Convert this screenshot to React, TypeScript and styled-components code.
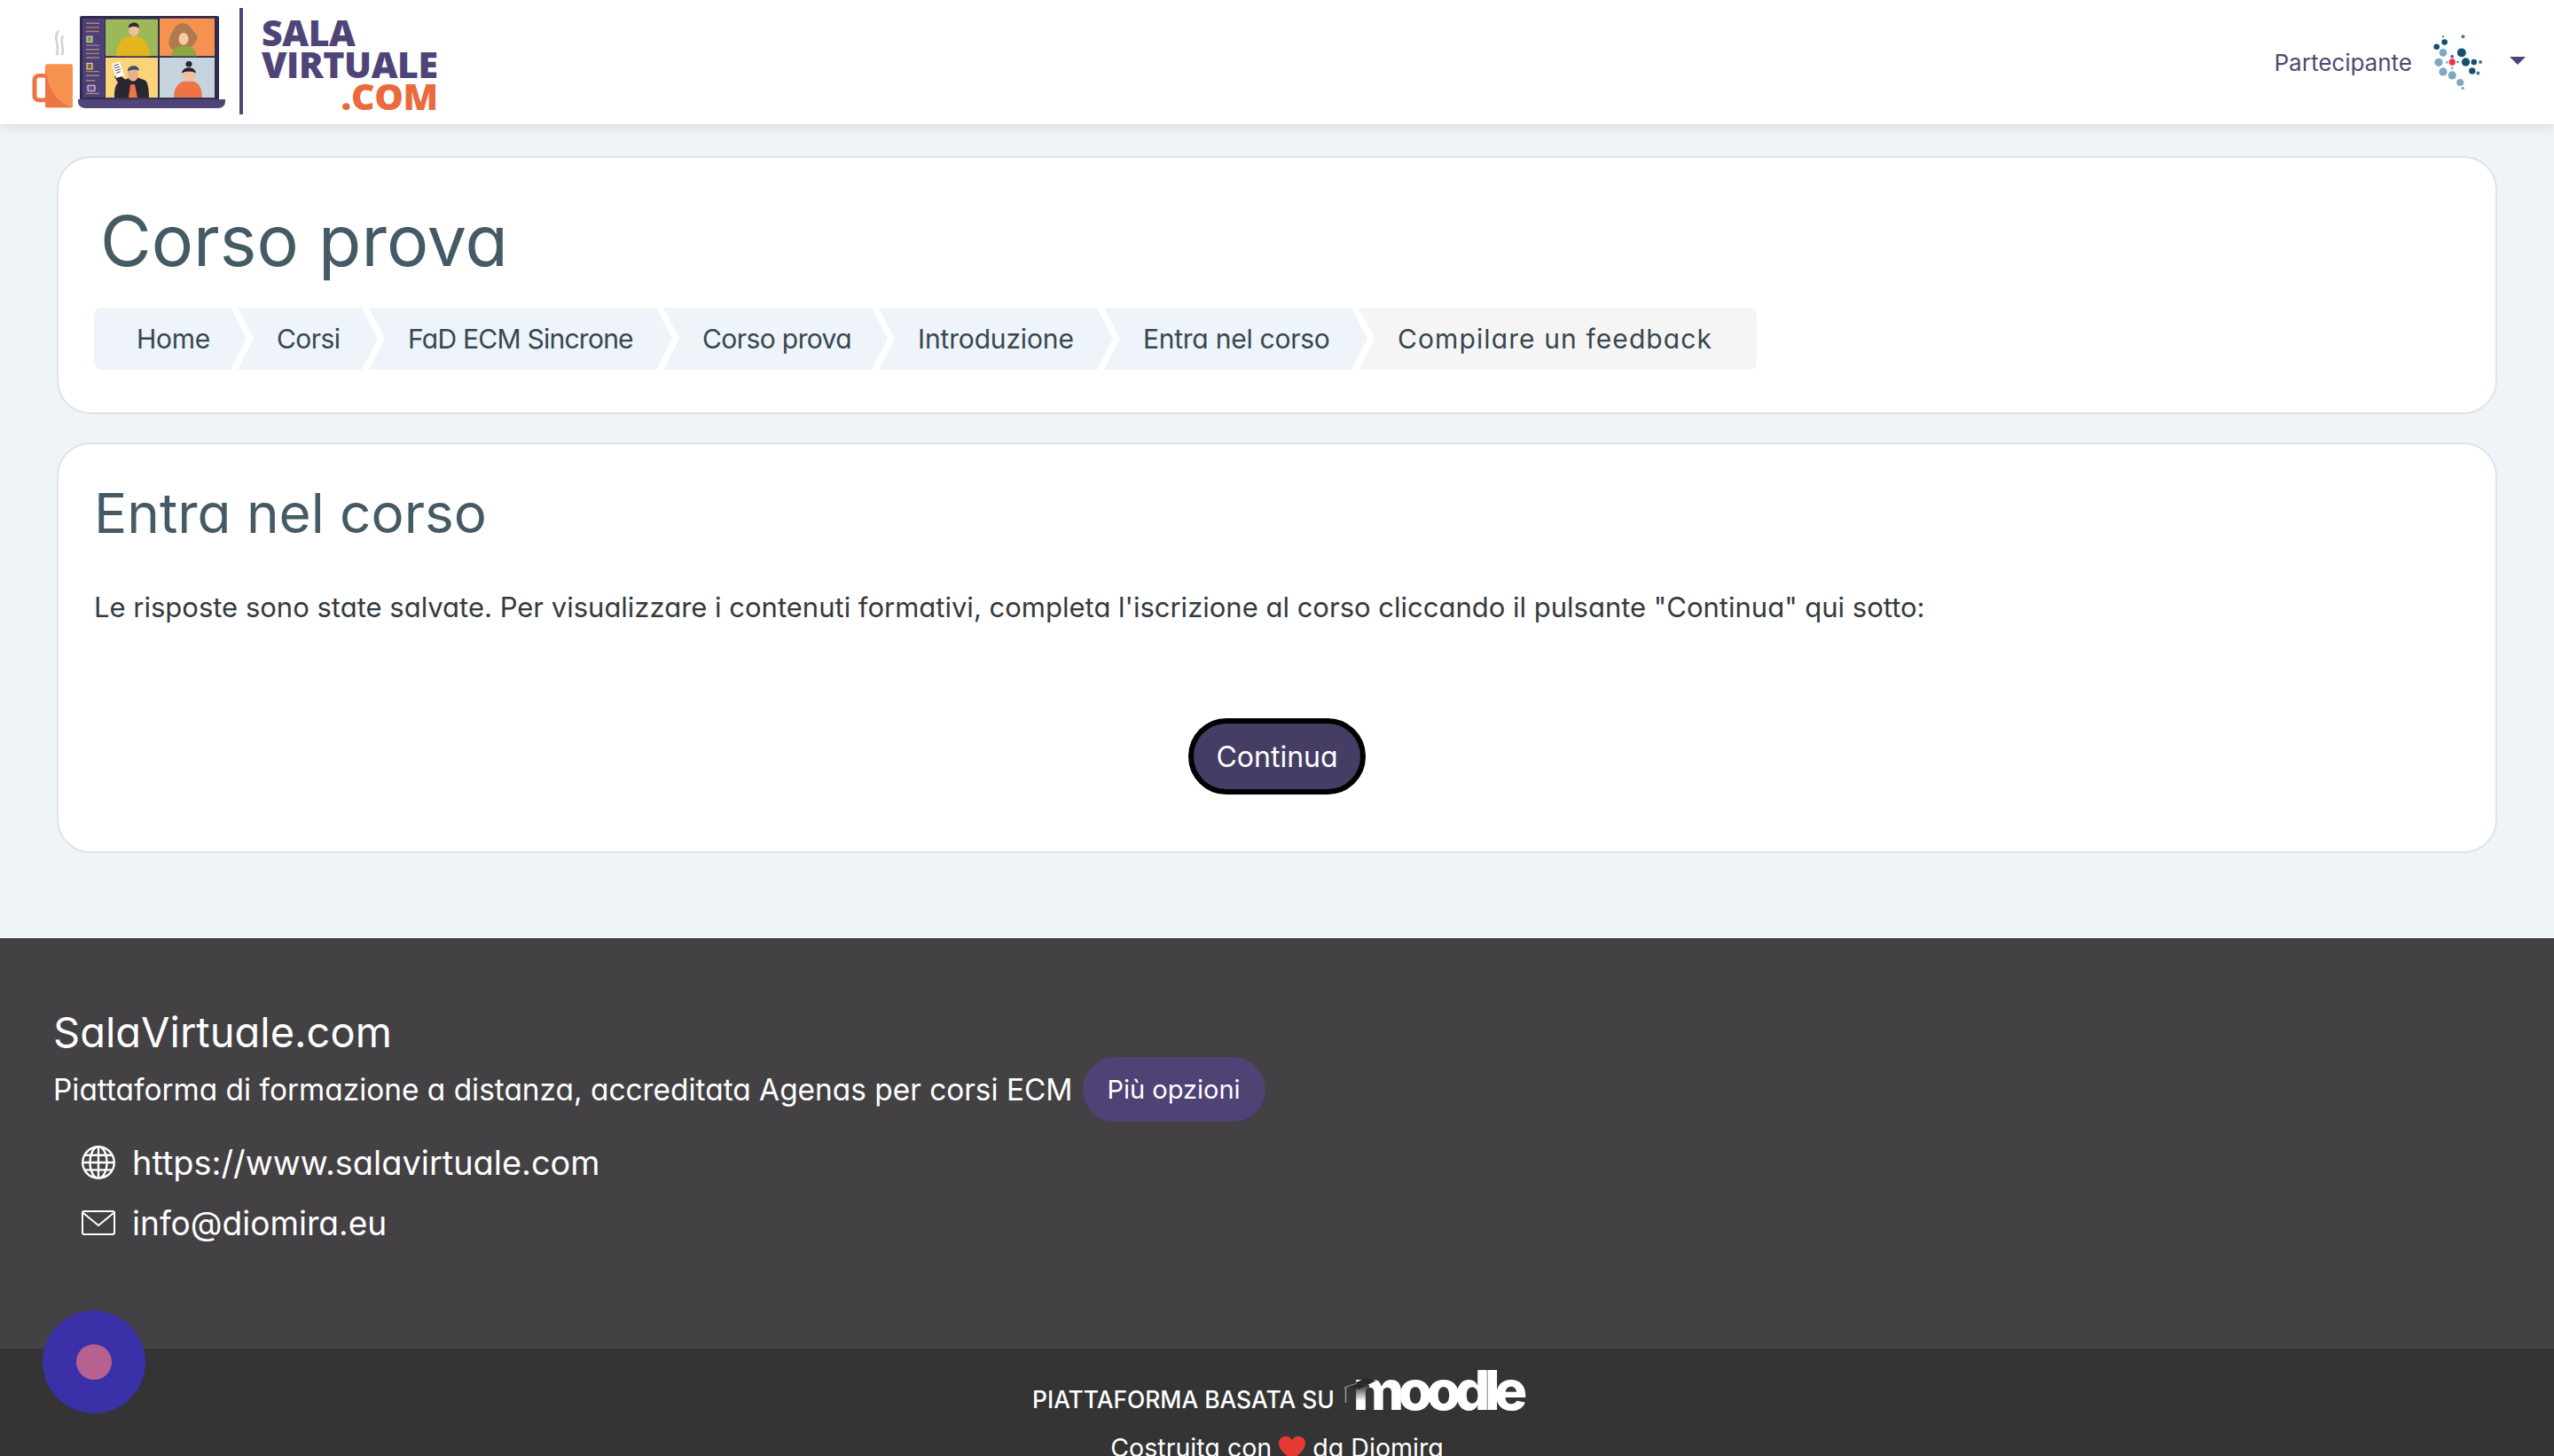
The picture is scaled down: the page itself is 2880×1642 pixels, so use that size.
import styled, { createGlobalStyle } from "styled-components";
import { BsGlobe } from "react-icons/bs";

const GlobalStyle = createGlobalStyle`
  html, body {
    margin: 0;
    padding: 0;
    height: 100%;
    overflow: hidden;
    background: #eff4f9;
  }
  body {
    font-family: Inter, "Open Sans", sans-serif;
    font-feature-settings: "cv11" 1;
  }
  * {
    box-sizing: border-box;
  }
`;

const Page = styled.div`
  height: 100vh;
  overflow: hidden;
  display: flex;
  flex-direction: column;
  position: relative;
`;

const Header = styled.header`
  height: 140px;
  flex: none;
  background: #fff;
  box-shadow: 0 2px 14px rgba(40, 60, 70, 0.14);
  display: flex;
  align-items: center;
  justify-content: space-between;
  padding: 0 32px 0 36px;
  position: relative;
`;

const Logo = styled.div`
  display: flex;
  align-items: center;
`;

const LogoArt = styled.svg`
  width: 220px;
  height: 105px;
  display: block;
`;

const LogoDivider = styled.div`
  width: 4px;
  height: 120px;
  margin: 0 0 2px 14px;
  background: #4f4478;
`;

const LogoText = styled.div`
  margin: 3px 0 0 21px;
  display: flex;
  flex-direction: column;
  font-family: "Open Sans", sans-serif;
  font-feature-settings: normal;
  font-weight: 800;
  font-size: 41px;
  line-height: 36px;
  letter-spacing: -0.4px;
  color: #4f4478;
`;

const LogoDomain = styled.span`
  align-self: flex-end;
  color: #ea6a3e;
`;

const UserMenu = styled.div`
  display: flex;
  align-items: center;
`;

const UserName = styled.span`
  font-size: 26px;
  font-feature-settings: normal;
  color: #4f4a72;
`;

const Avatar = styled.svg`
  width: 63px;
  height: 70px;
  margin-left: 20px;
  display: block;
`;

const Caret = styled.span`
  width: 0;
  height: 0;
  margin: 0 0 4px 27px;
  border-left: 9px solid transparent;
  border-right: 9px solid transparent;
  border-top: 9px solid #4f4478;
`;

const Main = styled.main`
  flex: none;
  height: 918px;
  padding: 36px 64px 0;
  display: flex;
  flex-direction: column;
  gap: 32px;
`;

const Card = styled.section`
  background: #fff;
  border: 2px solid #dde3ea;
  border-radius: 38px;
`;

const TitleCard = styled(Card)`
  height: 291px;
  padding: 43px 40px 0;
`;

const Title = styled.h1`
  margin: 0 0 0 7px;
  font-size: 79px;
  line-height: 100px;
  font-weight: 400;
  color: #455a64;
`;

const Breadcrumb = styled.nav`
  margin-top: 26px;
  display: flex;
`;

const Crumb = styled.a<{ $first?: boolean; $last?: boolean; $width: number; $spacing: number }>`
  width: ${(p) => p.$width}px;
  height: 70px;
  flex: none;
  margin-left: ${(p) => (p.$first ? 0 : -10)}px;
  padding: 0 0 0 ${(p) => (p.$first ? 48 : 44)}px;
  display: flex;
  align-items: center;
  font-size: 30px;
  letter-spacing: ${(p) => p.$spacing}px;
  white-space: nowrap;
  color: #37474f;
  background: ${(p) => (p.$last ? "#f5f5f5" : "#eef4f9")};
  border-radius: ${(p) => (p.$first ? "8px 0 0 8px" : p.$last ? "0 8px 8px 0" : "0")};
  clip-path: ${(p) =>
    p.$last
      ? "polygon(0 0, 100% 0, 100% 100%, 0 100%, 18px 50%)"
      : p.$first
        ? "polygon(0 0, calc(100% - 18px) 0, 100% 50%, calc(100% - 18px) 100%, 0 100%)"
        : "polygon(0 0, calc(100% - 18px) 0, 100% 50%, calc(100% - 18px) 100%, 0 100%, 18px 50%)"};
`;

const ContentCard = styled(Card)`
  height: 463px;
  padding: 39px 40px 0;
`;

const Heading = styled.h2`
  margin: 0;
  font-size: 62px;
  line-height: 78px;
  font-weight: 400;
  color: #455a64;
`;

const Message = styled.p`
  margin: 45px 0 0;
  font-size: 31px;
  line-height: 44px;
  color: #343a40;
`;

const ButtonRow = styled.div`
  margin-top: 103px;
  display: flex;
  justify-content: center;
`;

const ContinueButton = styled.button`
  width: 200px;
  height: 86px;
  border: 6px solid #000;
  border-radius: 43px;
  background: #453d63;
  color: #fff;
  font-family: inherit;
  font-feature-settings: inherit;
  font-size: 32px;
`;

const Footer = styled.footer`
  flex: none;
  height: 463px;
  background: #434143;
  color: #fff;
  padding: 84px 60px 0;
`;

const FooterTitle = styled.div`
  font-size: 47px;
  line-height: 44px;
`;

const FooterDescription = styled.div`
  margin-top: 6px;
  height: 73px;
  display: flex;
  align-items: center;
  font-size: 33.4px;
`;

const MoreButton = styled.a`
  margin-left: 11px;
  width: 206px;
  height: 73px;
  border-radius: 37px;
  background: #4f4275;
  display: flex;
  align-items: center;
  justify-content: center;
  font-size: 29px;
`;

const ContactList = styled.ul`
  list-style: none;
  margin: 12px 0 0;
  padding: 0 0 0 32px;
`;

const ContactRow = styled.li<{ $size: number }>`
  height: 68px;
  display: flex;
  align-items: center;
  gap: 19px;
  font-size: ${(p) => p.$size}px;
  svg {
    width: 38px;
    height: 38px;
    flex: none;
  }
`;

const BottomBar = styled.div`
  flex: none;
  height: 160px;
  background: #343434;
  color: #fff;
  padding-top: 18px;
  display: flex;
  flex-direction: column;
  align-items: center;
`;

const PoweredBy = styled.div`
  height: 56px;
  display: flex;
  align-items: flex-end;
  font-size: 26.4px;
  font-weight: 500;
`;

const PoweredText = styled.span`
  margin-bottom: 1px;
`;

const MoodleMark = styled.span`
  position: relative;
  margin: 0 0 -1px 21px;
  font-size: 62px;
  line-height: 56px;
  font-weight: 800;
  letter-spacing: -6.4px;
  font-feature-settings: normal;
`;

const MoodleHat = styled.svg`
  position: absolute;
  left: -10px;
  top: 14px;
  width: 36px;
  height: 30px;
`;

const BuiltWith = styled.div`
  margin-top: 16px;
  display: flex;
  align-items: center;
  gap: 8px;
  font-size: 28.6px;
  line-height: 44px;
`;

const Heart = styled.svg`
  width: 30px;
  height: 28px;
`;

const ChatBubble = styled.div`
  position: absolute;
  left: 48px;
  bottom: 48px;
  width: 116px;
  height: 116px;
  border-radius: 50%;
  background: #3a30a8;
  display: flex;
  align-items: center;
  justify-content: center;
`;

const ChatDot = styled.div`
  width: 40px;
  height: 40px;
  border-radius: 50%;
  background: #b8608f;
`;

const crumbs = [
  { label: "Home", width: 172, spacing: -0.3 },
  { label: "Corsi", width: 158, spacing: -0.6 },
  { label: "FaD ECM Sincrone", width: 342, spacing: -0.75 },
  { label: "Corso prova", width: 253, spacing: -0.6 },
  { label: "Introduzione", width: 264, spacing: -0.15 },
  { label: "Entra nel corso", width: 297, spacing: -0.25 },
  { label: "Compilare un feedback", width: 449, spacing: 1.1 },
];

const avatarDots = [
  [765, 128, 3, "#14506e"], [833, 128, 6, "#3f7a94"], [770, 147, 10, "#14506e"],
  [743, 163, 10, "#14506e"], [765, 183, 13, "#7fa9bf"], [828, 183, 15, "#14506e"],
  [796, 196, 6, "#3f7a94"], [750, 216, 14, "#7fa9bf"], [778, 216, 4, "#7fa9bf"],
  [796, 215, 11, "#ef3340"], [815, 215, 4, "#3f7a94"], [842, 215, 14, "#14506e"],
  [870, 215, 10, "#14506e"], [892, 215, 6, "#3f7a94"], [796, 235, 4, "#7fa9bf"],
  [765, 248, 14, "#7fa9bf"], [796, 260, 14, "#7fa9bf"], [864, 245, 11, "#14506e"],
  [884, 253, 6, "#3f7a94"], [823, 284, 12, "#7fa9bf"], [832, 304, 5, "#7fa9bf"],
] as const;

function LaptopArt() {
  return (
    <LogoArt viewBox="36 18 220 114" preserveAspectRatio="none">
      {/* steam */}
      <path d="M66 36c-7 10 2 16-2 30 M71 42c-4 8 2 12-1 24" fill="none" stroke="#cfd3d5" strokeWidth="2.6" />
      {/* mug */}
      <rect x="39" y="91" width="15" height="30" rx="5" fill="none" stroke="#ee7446" strokeWidth="5" />
      <rect x="51" y="77" width="31" height="53" rx="2" fill="#f6914f" />
      <path d="M51 77c2 28 10 46 31 53H53a2 2 0 0 1-2-2z" fill="#ee7446" />
      {/* laptop */}
      <rect x="90" y="18" width="157" height="104" rx="2" fill="#2f2a4e" />
      <rect x="93" y="21" width="25" height="97" fill="#4c3f7a" />
      <path d="M97 27h15M97 32h15M97 37h15M97 54h15M97 59h15M97 64h15M97 69h15M97 86h15M97 91h15M97 97h10M97 113h15" stroke="#a98a6a" strokeWidth="1.5" />
      <rect x="98" y="43" width="6" height="7" fill="#7f9a4a" stroke="#c7d79a" strokeWidth="1.2" />
      <rect x="98" y="76" width="6" height="7" fill="#7d6a3f" stroke="#f5d67f" strokeWidth="1.2" />
      <rect x="99" y="103" width="8" height="7" rx="1" fill="#6a5a90" stroke="#e0d0e6" strokeWidth="1.2" />
      <rect x="119" y="22" width="59" height="45" fill="#9cb95a" />
      <rect x="180" y="21" width="62" height="46" fill="#f6914f" />
      <rect x="119" y="69" width="59" height="49" fill="#fdd37a" />
      <rect x="180" y="69" width="62" height="49" fill="#c6d4e0" />
      {/* top left person */}
      <path d="M131 67c1-16 7-22 14-24h10c7 2 13 8 14 24z" fill="#e5b51e" />
      <ellipse cx="151" cy="35" rx="6" ry="8" fill="#f0bf9c" />
      <path d="M145 33c-1-8 12-10 12 0-3-3-9-3-12 0z" fill="#2e2a2a" />
      {/* top right person */}
      <path d="M193 58c-6-8 0-18 3-24 4-9 15-9 19-2 4 7 9 8 7 15-2 6-7 8-8 12l-15 2z" fill="#b17a4e" />
      <path d="M193 67c1-7 5-11 10-12h9c5 1 9 5 10 12z" fill="#8aa63e" />
      <ellipse cx="207" cy="46" rx="5.500" ry="7.500" fill="#f6c9a8" />
      {/* bottom left person */}
      <path d="M129 118c0-10 1-15 4-18l-4-8 6-2 6 6 7-3h6l10 4c3 3 4 12 4 21z" fill="#2a2633" />
      <path d="M145 118l2-16h5l3 16z" fill="#ee7446" />
      <ellipse cx="150" cy="90" rx="6" ry="8" fill="#eab08c" />
      <path d="M144 86c-1-8 12-10 13-1-4-2-9-2-13 1z" fill="#3d4a7a" />
      <path d="M126 77l9-3 5 17-9 3z" fill="#fff" />
      <path d="M128 79l6-2M129 82l6-2M130 85l6-2M131 88l5-2" stroke="#444" strokeWidth="1" />
      {/* bottom right person */}
      <circle cx="213" cy="77" r="3.500" fill="#26232e" />
      <path d="M196 118c0-12 5-18 11-20h11c6 2 10 8 10 20z" fill="#ee7446" />
      <circle cx="213" cy="90" r="7.500" fill="#f0bf9c" />
      <path d="M205 88c1-9 15-9 16 0-4-3-12-3-16 0z" fill="#26232e" />
      {/* base */}
      <path d="M88 120h166v3a8 8 0 0 1-8 8H96a8 8 0 0 1-8-8z" fill="#4f4478" />
    </LogoArt>
  );
}

function MailIcon() {
  return (
    <svg viewBox="0 0 38 38" fill="none" stroke="#fff" strokeWidth="2">
      <rect x="1" y="6" width="36" height="26" rx="2" />
      <path d="M2 8l17 14L36 8" />
    </svg>
  );
}

function App() {
  return (
    <Page>
      <GlobalStyle />
      <Header>
        <Logo>
          <LaptopArt />
          <LogoDivider />
          <LogoText>
            <span>SALA</span>
            <span>VIRTUALE</span>
            <LogoDomain>.COM</LogoDomain>
          </LogoText>
        </Logo>
        <UserMenu>
          <UserName>Partecipante</UserName>
          <Avatar viewBox="720 110 190 210">
            {avatarDots.map(([x, y, r, c]) => (
              <circle key={`${x}-${y}`} cx={x} cy={y} r={r} fill={c} />
            ))}
          </Avatar>
          <Caret />
        </UserMenu>
      </Header>
      <Main>
        <TitleCard>
          <Title>Corso prova</Title>
          <Breadcrumb>
            {crumbs.map((c, i) => (
              <Crumb key={c.label} $width={c.width} $spacing={c.spacing} $first={i === 0} $last={i === crumbs.length - 1}>
                {c.label}
              </Crumb>
            ))}
          </Breadcrumb>
        </TitleCard>
        <ContentCard>
          <Heading>Entra nel corso</Heading>
          <Message>
            Le risposte sono state salvate. Per visualizzare i contenuti formativi, completa l'iscrizione al corso
            cliccando il pulsante "Continua" qui sotto:
          </Message>
          <ButtonRow>
            <ContinueButton>Continua</ContinueButton>
          </ButtonRow>
        </ContentCard>
      </Main>
      <Footer>
        <FooterTitle>SalaVirtuale.com</FooterTitle>
        <FooterDescription>
          Piattaforma di formazione a distanza, accreditata Agenas per corsi ECM
          <MoreButton>Più opzioni</MoreButton>
        </FooterDescription>
        <ContactList>
          <ContactRow $size={37.9}>
            <BsGlobe />
            https://www.salavirtuale.com
          </ContactRow>
          <ContactRow $size={37.1}>
            <MailIcon />
            info@diomira.eu
          </ContactRow>
        </ContactList>
      </Footer>
      <BottomBar>
        <PoweredBy>
          <PoweredText>PIATTAFORMA BASATA SU</PoweredText>
          <MoodleMark>
            moodle
            <MoodleHat viewBox="0 0 36 30">
              <defs>
                <linearGradient id="moodleFade" x1="0" y1="0" x2="0" y2="1">
                  <stop offset="0" stopColor="#343434" />
                  <stop offset="1" stopColor="#343434" stopOpacity="0" />
                </linearGradient>
              </defs>
              <rect x="8" y="8" width="20" height="18" fill="url(#moodleFade)" />
              <path d="M0 11L24 0l12 3-20 10-7-3z" fill="#2a2a2a" />
              <path d="M0 11l14-5" stroke="#8a8a8a" strokeWidth="1.2" />
              <path d="M1.500 11v17" stroke="#9a9a9a" strokeWidth="1.5" />
            </MoodleHat>
          </MoodleMark>
        </PoweredBy>
        <BuiltWith>
          Costruita con
          <Heart viewBox="0 0 24 22">
            <path d="M12 22C5 16 0 12 0 6.500A6.300 6.300 0 0 1 12 4a6.300 6.300 0 0 1 12 2.500C24 12 19 16 12 22z" fill="#e53935" />
          </Heart>
          da Diomira
        </BuiltWith>
      </BottomBar>
      <ChatBubble>
        <ChatDot />
      </ChatBubble>
    </Page>
  );
}

export default App;
